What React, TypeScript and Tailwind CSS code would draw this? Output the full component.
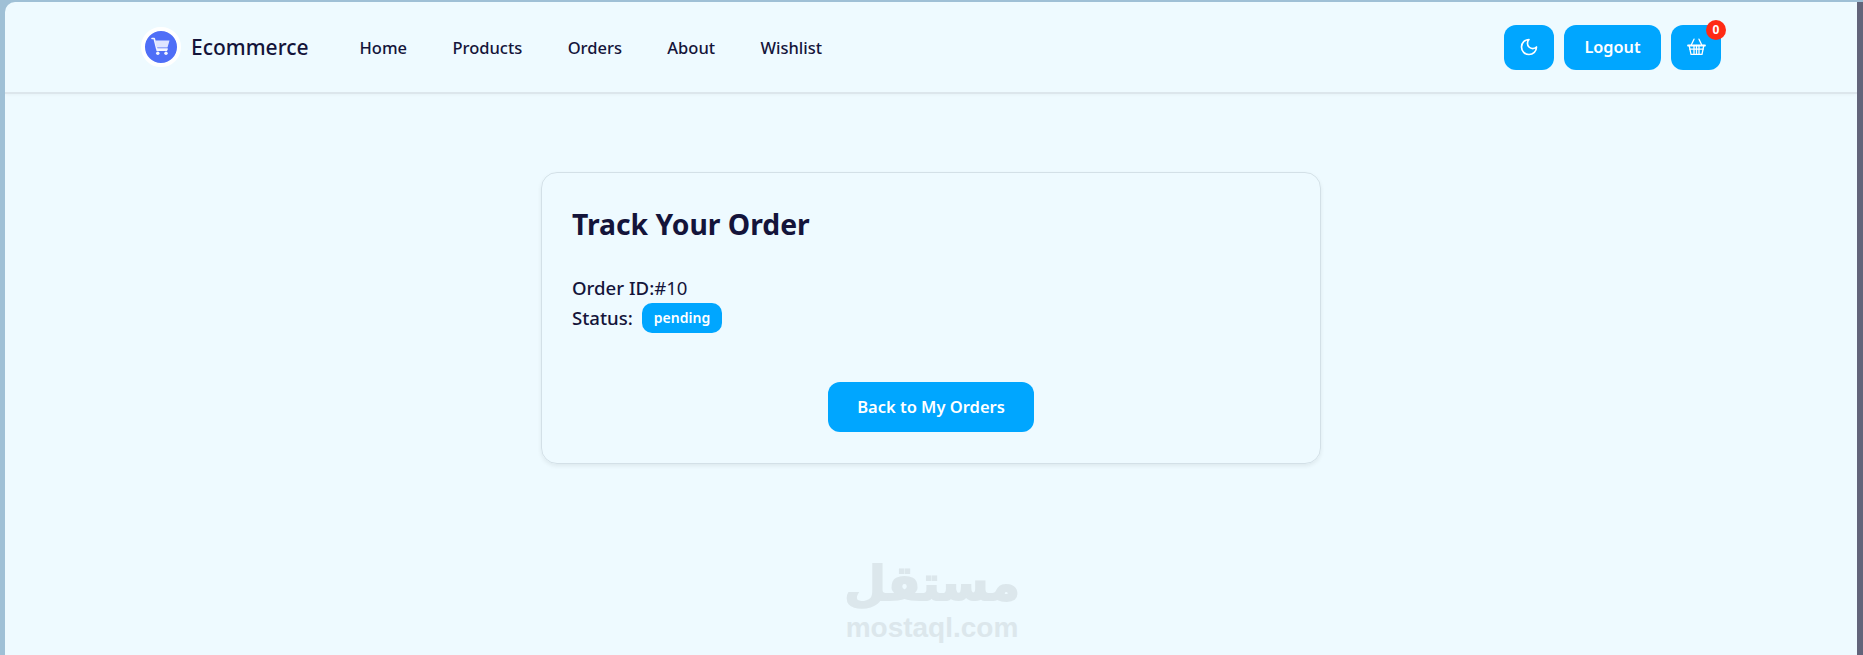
import React from 'react';
import { LuMoon } from 'react-icons/lu';

const links = ['Home', 'Products', 'Orders', 'About', 'Wishlist'];

const CartIcon = () => (
  <svg width="20" height="20" viewBox="0 0 20 20" fill="none">
    <path d="M1 1.5h2.2l2.6 10.6h10.4" stroke="#f4f6ff" strokeWidth="1.6" strokeLinecap="round" strokeLinejoin="round" />
    <path d="M3.9 3.6h14.6l-2 6.8H5.6z" fill="#dfe5ff" />
    <circle cx="6.8" cy="16.2" r="1.7" fill="#f4f6ff" />
    <circle cx="15" cy="16.2" r="1.7" fill="#f4f6ff" />
    <path d="M5.4 13.4h10.8" stroke="#f4f6ff" strokeWidth="1.2" />
  </svg>
);

const BasketIcon = () => (
  <svg width="19" height="18" viewBox="0 0 19 18" fill="none" stroke="currentColor" strokeWidth="1.3" strokeLinejoin="round" strokeLinecap="round">
    <path d="M1 7.5h17" strokeWidth="1.8" />
    <path d="M4 7.5 7 1.2M15 7.5 12 1.2" />
    <path d="M2.2 7.5 4 16.3h11l1.8-8.8" />
    <path d="M2.9 11.2h13.2M7 7.5v8.8M12 7.5v8.8M9.5 7.5v8.8" />
  </svg>
);

const App = () => {
  return (
    <div className="h-[655px] overflow-hidden bg-[#9fc0d6] pt-[2px] pl-[5px] font-['Noto_Sans',sans-serif] text-[#14143a]">
      <div className="relative flex h-[653px] overflow-hidden">
        <div className="relative h-full w-[1852px] overflow-hidden rounded-tl-[10px] bg-[#eefaff]">
          {/* Navbar */}
          <header className="flex h-[92px] items-center justify-between border-b-2 border-[#dce6ec] pl-[136px] pr-[136px] shadow-[0_1px_3px_rgba(0,0,0,0.03)]">
            <div className="flex items-center">
              <div className="flex h-[40px] w-[40px] items-center justify-center rounded-full border-[4px] border-white bg-[#4f6ef7]">
                <CartIcon />
              </div>
              <span className="ml-[10px] pt-[1px] text-[21px] font-medium">Ecommerce</span>
              <nav className="ml-[51px] flex gap-[45.4px] pt-[2px] text-[16.5px] font-medium">
                {links.map((link) => (
                  <a key={link} href="#">
                    {link}
                  </a>
                ))}
              </nav>
            </div>
            <div className="flex items-center gap-[10px] text-white">
              <button className="flex h-[45px] w-[50px] items-center justify-center rounded-[12px] bg-[#00a6ff]">
                <LuMoon size={20} />
              </button>
              <button className="h-[45px] w-[97px] rounded-[12px] bg-[#00a6ff] pt-[1px] text-[16.3px] font-semibold">Logout</button>
              <button className="relative flex h-[45px] w-[50px] items-center justify-center rounded-[12px] bg-[#00a6ff]">
                <BasketIcon />
                <span className="absolute -top-[5px] -right-[5px] flex h-[20px] w-[20px] items-center justify-center rounded-full bg-[#ff2a14] text-[12px] font-bold">
                  0
                </span>
              </button>
            </div>
          </header>

          {/* Order card */}
          <main className="flex justify-center pt-[78px]">
            <div className="h-[292px] w-[780px] rounded-[16px] border border-[#d3e0e7] px-[30px] pt-[32px] shadow-[0_2px_4px_rgba(0,0,0,0.07)]">
              <h1 className="text-[28.3px] leading-[38px] font-bold">Track Your Order</h1>
              <div className="mt-[30px] text-[18.6px] leading-[30px]">
                <p>
                  <span className="font-medium">Order ID:</span>#10
                </p>
                <p className="flex items-center">
                  <span className="font-medium">Status:</span>
                  <span className="ml-[9px] rounded-[10px] bg-[#00a6ff] px-[12px] text-[14px] leading-[30px] font-semibold text-white">
                    pending
                  </span>
                </p>
              </div>
              <div className="mt-[49px] flex justify-center">
                <button className="h-[50px] w-[206px] rounded-[12px] bg-[#00a6ff] text-[16.5px] font-semibold text-white">
                  Back to My Orders
                </button>
              </div>
            </div>
          </main>

          {/* Watermark */}
          <div className="absolute top-[563px] left-[839px] flex w-[176px] flex-col items-center text-[#dce7ec]">
            <span className="origin-bottom scale-[1.2] font-['DejaVu_Sans',sans-serif] text-[40px] leading-[47px] font-bold [-webkit-text-stroke:1.5px_#dce7ec]" dir="rtl">
              مستقل
            </span>
            <span className="font-['Liberation_Sans',sans-serif] text-[28px] leading-[32px] font-bold">mostaql.com</span>
          </div>
        </div>
        <div className="w-[6px] bg-[#62647a]" />
      </div>
    </div>
  );
};

export default App;
